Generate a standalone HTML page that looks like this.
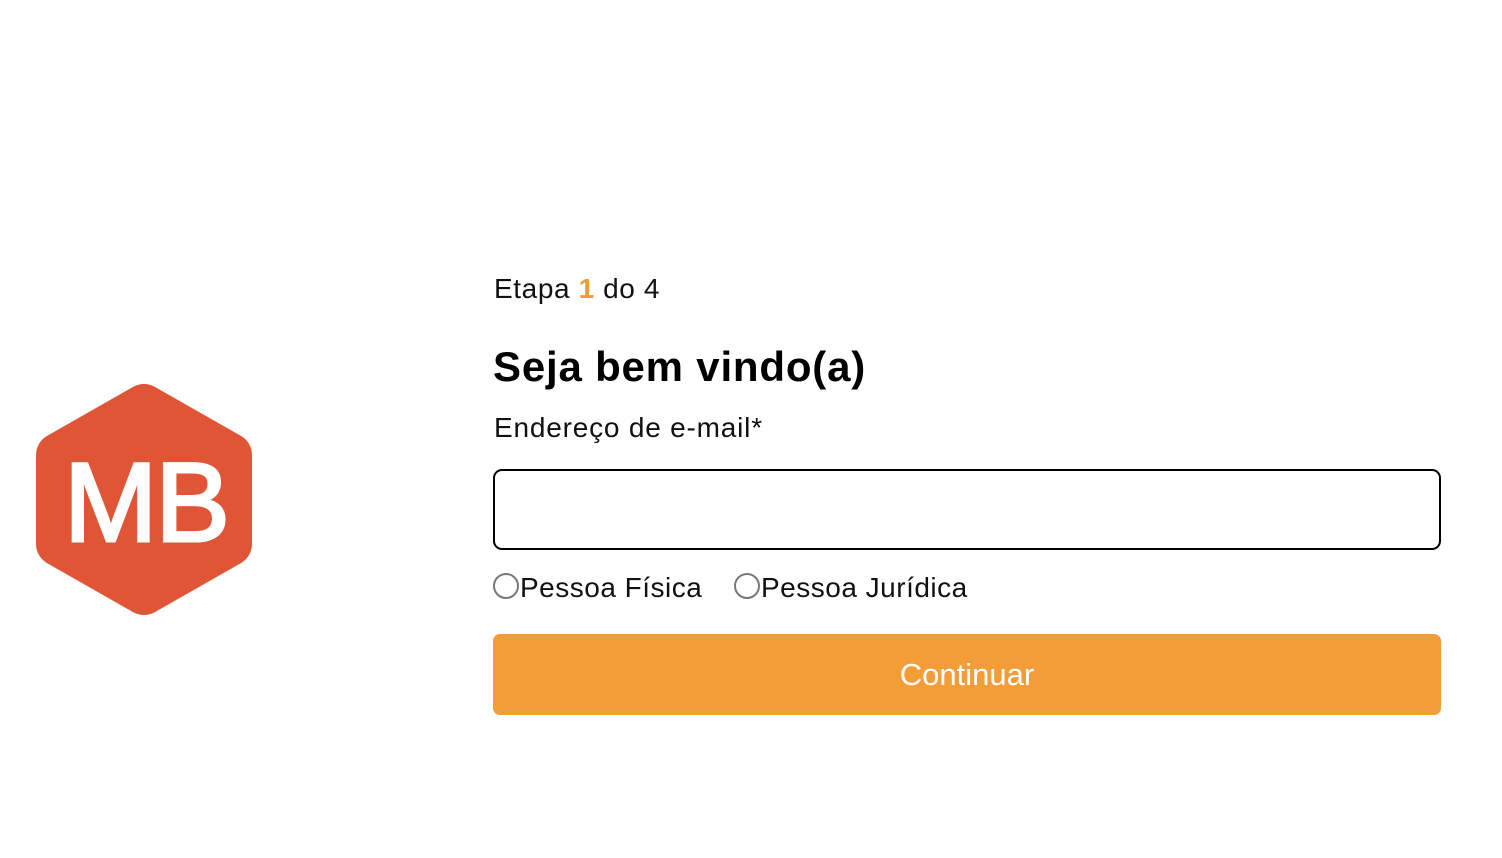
<!DOCTYPE html>
<html><head><meta charset="utf-8"><style>
body{margin:0;width:1502px;height:858px;background:#fff;font-family:"Liberation Sans",sans-serif;position:relative;overflow:hidden}
.a{position:absolute;white-space:nowrap}
</style></head><body>
<svg class="a" style="left:0;top:0" width="300" height="858">
<polygon points="144,406 230,455 230,544 144,593 58,544 58,455" fill="#e05536" stroke="#e05536" stroke-width="44" stroke-linejoin="round"/>
<text x="146" y="541" text-anchor="middle" font-family="Liberation Sans" font-size="112" fill="#fff" stroke="#fff" stroke-width="3" letter-spacing="-2">MB</text>
</svg>
<div class="a" style="left:494px;top:273px;font-size:28px;letter-spacing:0.6px;color:#111">Etapa <span style="color:#f39d39;font-weight:bold">1</span> do 4</div>
<div class="a" style="left:493px;top:343px;font-size:42px;letter-spacing:0.8px;font-weight:bold;color:#000">Seja bem vindo(a)</div>
<div class="a" style="left:494px;top:412px;font-size:28px;letter-spacing:0.8px;color:#111">Endereço de e-mail*</div>
<div class="a" style="left:493px;top:469px;width:944px;height:77px;border:2px solid #000;border-radius:9px"></div>
<div class="a" style="left:493px;top:573px;width:26px;height:26px;border:2px solid #777;border-radius:50%;box-sizing:border-box"></div>
<div class="a" style="left:520px;top:572px;font-size:28px;letter-spacing:0.5px;color:#111">Pessoa Física</div>
<div class="a" style="left:734px;top:573px;width:26px;height:26px;border:2px solid #777;border-radius:50%;box-sizing:border-box"></div>
<div class="a" style="left:761px;top:572px;font-size:28px;letter-spacing:0.5px;color:#111">Pessoa Jurídica</div>
<div class="a" style="left:493px;top:634px;width:948px;height:81px;background:#f39d39;border-radius:7px;color:#fff;font-size:31px;text-align:center;line-height:81px">Continuar</div>
</body></html>
